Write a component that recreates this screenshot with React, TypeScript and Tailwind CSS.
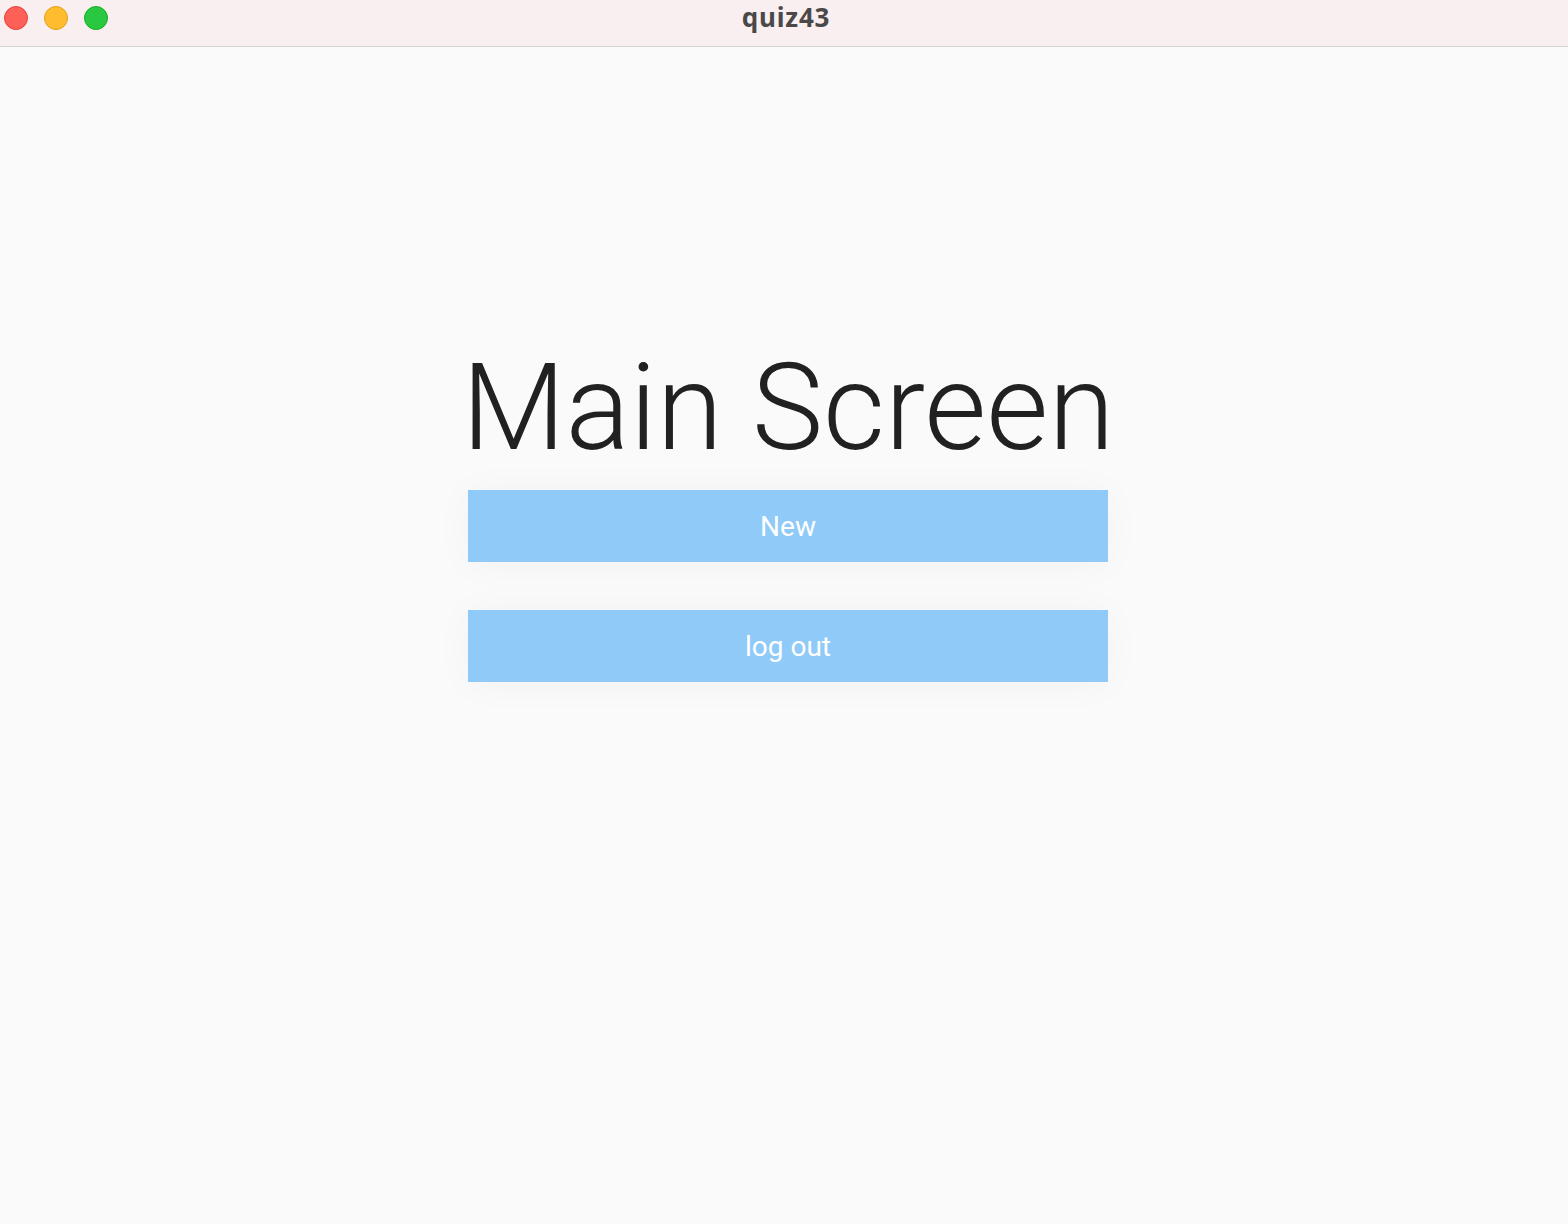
export default function App() {
  return (
    <div className="w-[1568px] h-[1224px] flex flex-col bg-[#fafafa] overflow-hidden" style={{ fontFamily: 'Roboto, "Liberation Sans", sans-serif' }}>
      <div className="relative h-[47px] shrink-0 bg-[#f9eff0] border-b border-[#d6d3d3] flex items-start">
        <div className="flex gap-[16px] pl-[4px] pt-[6px]">
          <div className="w-[24px] h-[24px] rounded-full bg-[#fe5f57] border border-[#e2463f]" />
          <div className="w-[24px] h-[24px] rounded-full bg-[#febc2e] border border-[#e1a116]" />
          <div className="w-[24px] h-[24px] rounded-full bg-[#28c840] border border-[#1aab29]" />
        </div>
        <div className="absolute left-[4px] right-0 top-0 h-[35px] flex items-center justify-center text-[26px] font-bold text-[#4b4849] tracking-[0.8px]" style={{ fontFamily: '"Noto Sans", "Open Sans", sans-serif' }}>
          quiz43
        </div>
      </div>
      <div className="flex flex-col items-center pt-[301px] pl-[8px]">
        <h1 className="text-[120px] leading-none font-light text-[#212121]">Main Screen</h1>
        <div className="mt-[22px] flex flex-col gap-[48px]">
          <button className="w-[640px] h-[72px] pt-[2px] bg-[#90caf9] text-white text-[28px] flex items-center justify-center shadow-[0_2px_40px_rgba(0,0,0,0.035)]">New</button>
          <button className="w-[640px] h-[72px] pt-[2px] bg-[#90caf9] text-white text-[28px] flex items-center justify-center shadow-[0_2px_40px_rgba(0,0,0,0.035)]">log out</button>
        </div>
      </div>
    </div>
  );
}
